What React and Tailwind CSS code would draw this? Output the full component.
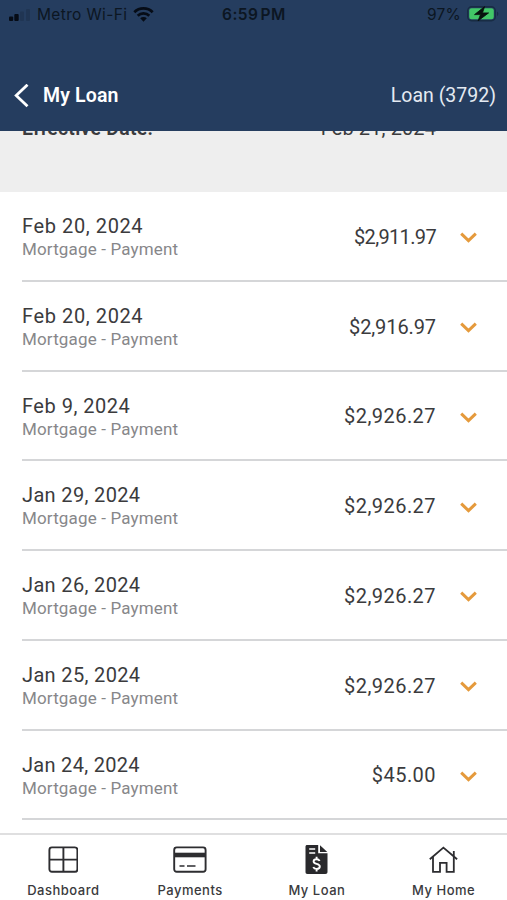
const transactions = [
  { id: 1, date: 'Feb 20, 2024', amount: '$2,911.97', tracking: 'tracking-[-0.65px]', dateTracking: 'tracking-[0.6px]' },
  { id: 2, date: 'Feb 20, 2024', amount: '$2,916.97', tracking: 'tracking-[-0.1px]', dateTracking: 'tracking-[0.6px]' },
  { id: 3, date: 'Feb 9, 2024', amount: '$2,926.27', tracking: 'tracking-[0.45px]', dateTracking: 'tracking-[0.5px]' },
  { id: 4, date: 'Jan 29, 2024', amount: '$2,926.27', tracking: 'tracking-[0.45px]', dateTracking: 'tracking-[0.35px]' },
  { id: 5, date: 'Jan 26, 2024', amount: '$2,926.27', tracking: 'tracking-[0.45px]', dateTracking: 'tracking-[0.35px]' },
  { id: 6, date: 'Jan 25, 2024', amount: '$2,926.27', tracking: 'tracking-[0.45px]', dateTracking: 'tracking-[0.35px]' },
  { id: 7, date: 'Jan 24, 2024', amount: '$45.00', tracking: 'tracking-[0.45px]', dateTracking: 'tracking-[0.3px]' },
]

function StatusBar() {
  return (
    <div className="relative flex h-7 items-center justify-between pt-px pr-[7px] pl-[9px] font-['Inter',sans-serif] text-[#0c1622]">
      <div className="flex items-center">
        <svg width="22" height="14" viewBox="0 0 22 14" fill="#060c16">
          <rect x="0" y="8.5" width="4.2" height="4.5" rx="1" />
          <rect x="5.3" y="6" width="4.4" height="7" rx="1" />
          <rect x="11" y="3.5" width="4" height="9.5" rx="1" opacity="0.15" />
          <rect x="17" y="1" width="4" height="12" rx="1" opacity="0.15" />
        </svg>
        <span className="ml-[6px] text-[15.5px] tracking-[0.35px] whitespace-nowrap">Metro Wi-Fi</span>
        <svg className="ml-[6px]" width="21" height="16" viewBox="0 0 21 16" fill="none" stroke="#060c16" strokeWidth="2.7">
          <path d="M1.3 5.2a13 13 0 0 1 18.4 0" />
          <path d="M4.7 8.7a8.2 8.2 0 0 1 11.6 0" />
          <path d="M10.5 14.7 7.2 11.3a4.7 4.7 0 0 1 6.6 0z" fill="#060c16" stroke="none" />
        </svg>
      </div>
      <span className="absolute left-[222px] text-[15.5px] font-semibold tracking-[0.5px] whitespace-nowrap [word-spacing:-2.5px]">6:59 PM</span>
      <div className="flex items-center">
        <span className="text-[15.5px] tracking-[0.2px]">97%</span>
        <svg className="ml-[6px]" width="33" height="17" viewBox="0 0 33 17">
          <rect x="0.7" y="0.7" width="27.6" height="14" rx="4" fill="none" stroke="#182c44" strokeWidth="1.4" />
          <rect x="2.2" y="2.2" width="24.6" height="11" rx="2.3" fill="#42c768" />
          <path d="M30 5.5v4.6c1.8-.8 1.8-3.800 0-4.600z" fill="#182c44" />
          <path d="M17.6.6 7.500 8.600h6L11 14.900l10.600-8h-6.100z" fill="#07120e" stroke="#07120e" strokeWidth=".8" strokeLinejoin="round" />
        </svg>
      </div>
    </div>
  )
}

function Header() {
  return (
    <header className="relative z-10 h-[131px] shrink-0 bg-[#253d5f]">
      <StatusBar />
      <div className="flex h-[103px] items-center justify-between pt-[32px] pr-[11px] pl-[14px]">
        <div className="flex items-center">
          <svg width="15" height="24" viewBox="0 0 15 24" fill="none" stroke="#fff" strokeWidth="2.8">
            <path d="M13.5 0.7 2.2 11.5l11.3 10.800" />
          </svg>
          <h1 className="ml-[14px] text-[19.5px] font-semibold tracking-[0.15px] text-white">My Loan</h1>
        </div>
        <span className="text-[19.5px] text-[#e4eaf2]">Loan (3792)</span>
      </div>
    </header>
  )
}

function TransactionRow({ item }) {
  return (
    <li className="ml-[22px] flex h-[89.75px] items-center justify-between border-b-2 border-[#d5d6d8] pr-[30px]">
      <div className="pt-[2.5px]">
        <p className={`text-[20px] leading-[24px] text-[#3b3b3d] ${item.dateTracking}`}>{item.date}</p>
        <p className="text-[17px] leading-[22px] tracking-[0.15px] text-[#87878a]">Mortgage - Payment</p>
      </div>
      <div className="flex items-center pt-[2px]">
        <span className={`text-[20px] leading-[24px] text-[#3b3b3d] ${item.tracking}`}>{item.amount}</span>
        <svg className="mt-[2px] ml-[24px]" width="17" height="11" viewBox="0 0 17 11" fill="none" stroke="#e59a3c" strokeWidth="3">
          <path d="M1.2 1.7 8.5 8.7l7.3-7" />
        </svg>
      </div>
    </li>
  )
}

function DashboardIcon() {
  return (
    <svg width="30" height="30" viewBox="0 0 30 30" fill="none" stroke="#2d2d30" strokeWidth="1.9">
      <rect x="1.4" y="3.4" width="28" height="24.4" rx="2.5" />
      <path d="M15.4 3.4v24.4M1.4 15.6h28" />
    </svg>
  )
}

function PaymentsIcon() {
  return (
    <svg width="34" height="30" viewBox="0 0 34 30" fill="none" stroke="#2d2d30" strokeWidth="1.9">
      <rect x="1.2" y="3.4" width="31.4" height="24.4" rx="2.5" />
      <path d="M1 11h32" strokeWidth="4.6" />
      <path d="M6.5 22h5M14 22h8.5" strokeWidth="1.7" />
    </svg>
  )
}

function LoanIcon() {
  return (
    <svg width="24" height="30" viewBox="0 0 24 30">
      <path d="M2.2 1h11v8.200h9.300v18.500c0 1.500-.7 2.200-2.200 2.200H2.500C1 29.900.5 29.200.5 27.700V2.700C.5 1.600 1.100 1 2.200 1z" fill="#29292c" />
      <path d="M15 1.300 22.300 8H15z" fill="#29292c" />
      <path d="M4.200 5h6M4.200 9h6" stroke="#fff" strokeWidth="1.500" />
      <path d="M14.600 17c-.5-1.200-1.600-1.700-3-1.700-1.800 0-3 .8-3 2.200 0 3.300 6.200 1.500 6.200 5 0 1.500-1.300 2.400-3.100 2.400-1.600 0-2.900-.6-3.400-1.900M11.600 12.800v2.600M11.600 24.800v2.600" fill="none" stroke="#fff" strokeWidth="1.900" />
    </svg>
  )
}

function HomeIcon() {
  return (
    <svg width="30" height="30" viewBox="0 0 30 30" fill="none" stroke="#2d2d30" strokeWidth="1.8">
      <path d="M.8 15.300 14.400 3.600l13.700 11.700" />
      <path d="M4 12.700v15.100h7v-8.900h6.600v8.900h7.200V12.700" />
      <path d="M24.800 12V7" />
    </svg>
  )
}

const tabs = [
  { label: 'Dashboard', icon: DashboardIcon },
  { label: 'Payments', icon: PaymentsIcon },
  { label: 'My Loan', icon: LoanIcon },
  { label: 'My Home', icon: HomeIcon },
]

function TabBar() {
  return (
    <nav className="grid h-[67px] shrink-0 grid-cols-4 border-t-2 border-[#dfdfe0] bg-white">
      {tabs.map(({ label, icon: Icon }) => (
        <div key={label} className="flex flex-col items-center pt-[9px]">
          <Icon />
          <span className="mt-[7px] font-['Inter',sans-serif] text-[13px] leading-[18px] font-medium tracking-[0.5px] text-[#3a3a3d]">{label}</span>
        </div>
      ))}
    </nav>
  )
}

function App() {
  return (
    <div className="flex h-[900px] w-[507px] flex-col overflow-hidden bg-white font-['Roboto',sans-serif]">
      <Header />
      <main className="min-h-0 flex-1">
        <section className="flex h-[61px] items-start justify-between bg-[#eeeeee] pr-[71px] pl-[22px] text-[20px] leading-[24px] text-[#3b3b3d]">
          <span className="-mt-[14px] text-[19.5px] font-semibold tracking-[0.25px]">Effective Date:</span>
          <span className="-mt-[15px] tracking-[0.1px]">Feb 21, 2024</span>
        </section>
        <ul>
          {transactions.map((item) => (
            <TransactionRow key={item.id} item={item} />
          ))}
        </ul>
      </main>
      <TabBar />
    </div>
  )
}

export default App
